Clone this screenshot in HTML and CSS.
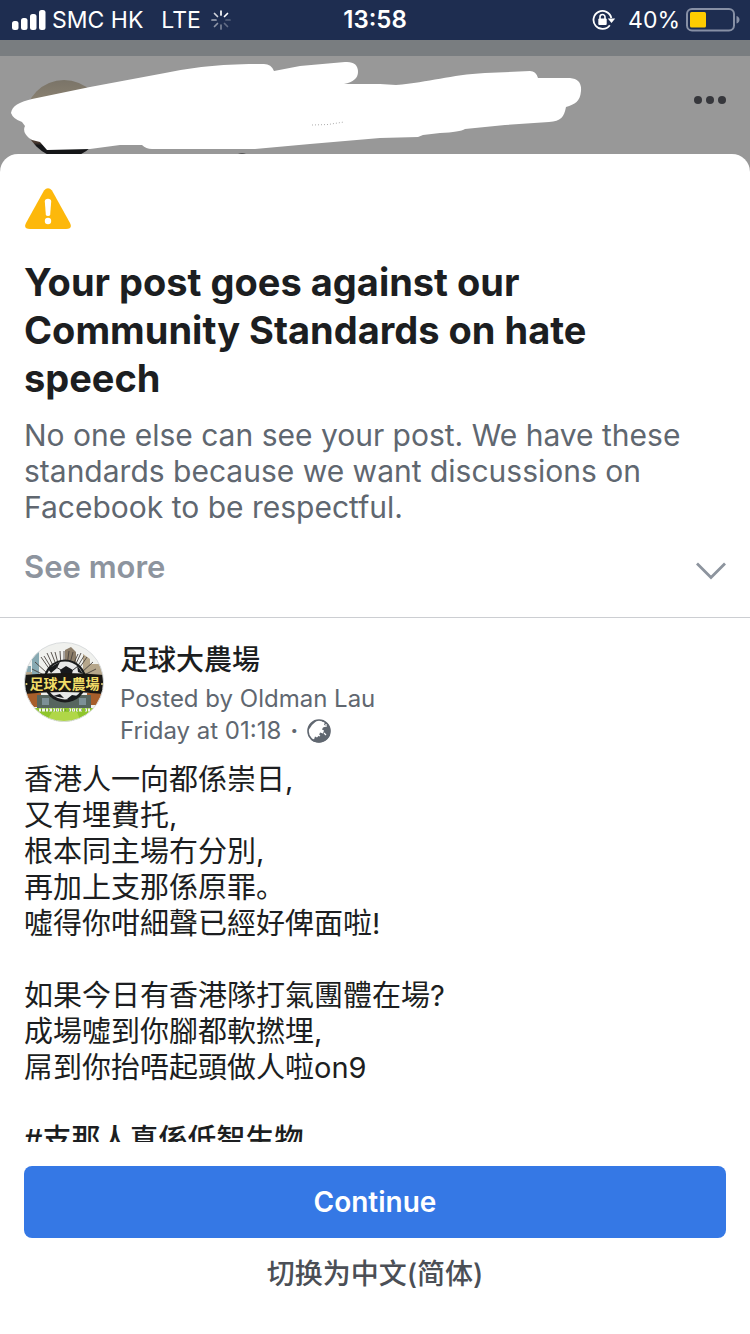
FILE: index.html
```html
<!DOCTYPE html>
<html lang="en">
<head>
<meta charset="utf-8">
<meta name="viewport" content="width=device-width, initial-scale=1">
<title>Community Standards</title>
<link rel="stylesheet" href="styles.css">
</head>
<body>
<div class="screen">
  <header class="status-bar">
    <div class="status-left">
      <svg class="signal" viewBox="0 0 34 20" aria-hidden="true"><g fill="#fff"><rect x="0" y="11" width="6.5" height="9" rx="2.5"/><rect x="9" y="8" width="6.5" height="12" rx="2.5"/><rect x="18" y="4" width="6.5" height="16" rx="2.5"/><rect x="27" y="0" width="6.5" height="20" rx="2.5"/></g></svg>
      <span>SMC HK</span>
      <span class="network">LTE</span>
      <svg class="spinner" viewBox="-10 -10 20 20" aria-hidden="true"><g stroke="#fff" stroke-width="1.7" stroke-linecap="round"><path d="M0-5V-9"/><path d="M3.5-3.5L6.5-6.5"/><path d="M5 0H9" opacity=".25"/><path d="M3.5 3.5L6.5 6.5" opacity=".3"/><path d="M0 5V9" opacity=".4"/><path d="M-3.5 3.5L-6.5 6.5" opacity=".5"/><path d="M-5 0H-9" opacity=".6"/><path d="M-3.5-3.5L-6.5-6.5" opacity=".8"/></g></svg>
    </div>
    <time class="clock">13:58</time>
    <div class="status-right">
      <svg class="lock" viewBox="0 0 24 22" aria-hidden="true"><path d="M17.8 16.2A9 9 0 1 1 19.3 9" fill="none" stroke="#fff" stroke-width="1.8"/><path d="M15.8 9.5h7.4l-3.7 4.6z" fill="#fff"/><rect x="6.3" y="9.6" width="8.4" height="6.4" rx="1" fill="#fff"/><path d="M8 10V8a2.5 2.5 0 0 1 5 0v2" fill="none" stroke="#fff" stroke-width="1.6"/></svg>
      <span>40%</span>
      <svg class="battery" viewBox="0 0 54 24" aria-hidden="true"><rect x="1" y="1" width="47" height="21.5" rx="5" fill="none" stroke="#8790a5" stroke-width="2"/><rect x="4" y="4" width="16" height="15.5" rx="1.5" fill="#ffcc00"/><path d="M50.5 8q3 1 3 3.800t-3 3.800z" fill="#8790a5"/></svg>
    </div>
  </header>
  <div class="strip"></div>
  <div class="post-header">
    <svg class="scribble" viewBox="0 56 600 98" aria-hidden="true">
      <defs><linearGradient id="face" x1="0" y1="0" x2="0" y2="1"><stop offset="0" stop-color="#7a7468"/><stop offset=".25" stop-color="#898070"/><stop offset=".8" stop-color="#4a3a30"/><stop offset=".84" stop-color="#151618"/></linearGradient></defs>
      <circle cx="64" cy="119" r="39" fill="url(#face)"/>
      <path d="M238 154q4-2 8 0z" fill="#555"/>
      <path fill="#fff" d="M11 113C12 106 19 102 32 99L90 87L165 73C195 67 220 64 262 64Q271 63 274 71L300 66L345 62Q358 61 358 72Q358 81 344 84L380 84L396 85C430 82 450 75 485 73L530 71Q536 71 538 78L570 78Q582 79 581 91C580 102 575 104 566 107C564 117 561 121 549 122L505 125L465 129Q460 132 440 133L423 135L418 137L380 138L310 144L255 149L152 149Q146 149 142 145L120 145L90 149L47 150L40 142L32 140L29 138Q22 132 25 126L22 122Q13 119 11 113Z"/>
      <path d="M312 125L328 124.500L344 122" stroke="#888" stroke-width=".7" stroke-dasharray="1 2" fill="none"/>
    </svg>
    <button class="more" type="button" aria-label="More options">
      <svg viewBox="0 0 32 8"><g fill="#36373c"><circle cx="4" cy="4" r="4"/><circle cx="16" cy="4" r="4"/><circle cx="28" cy="4" r="4"/></g></svg>
    </button>
  </div>
  <main class="sheet">
    <section class="notice">
      <svg class="warning" viewBox="0 0 48 42" aria-hidden="true"><path d="M20 2.500Q24-2 28 2.500L46 35Q49 41 42 41H6Q-1 41 2 35Z" fill="#fdb80b"/><path d="M20.800 13.500q0-2.800 3.200-2.800t3.200 2.800l-1 13q-.2 1.500-2.200 1.500t-2.200-1.500z" fill="#fff"/><circle cx="24" cy="33" r="3.200" fill="#fff"/></svg>
      <h1>Your post goes against our Community Standards on hate speech</h1>
      <p>No one else can see your post. We have these standards because we want discussions on Facebook to be respectful.</p>
      <button class="see-more" type="button">
        <span>See more</span>
        <svg viewBox="0 0 30 18" aria-hidden="true"><path d="M1 1.500L15 15.500L29 1.500" fill="none" stroke="#8d949e" stroke-width="2.800"/></svg>
      </button>
    </section>
    <article class="post">
      <div class="byline">
        <svg class="avatar" viewBox="0 0 80 80" role="img" aria-label="足球大農場">
          <defs><clipPath id="round"><circle cx="40" cy="40" r="39.500"/></clipPath></defs>
          <g clip-path="url(#round)">
            <path fill="#f0f1ee" d="M0 0h80v80H0z"/>
            <path fill="#87a9b2" d="M8 12l7-3v28H8zM0 24h7v14H0z"/><path fill="#b6a78c" d="M59 12l7 5v20h-7zM66 22h14v14H66zM0 30h8v8H0z"/>
            <path fill="#8c7d68" d="M41 8l6-3 5 5v15H41z"/>
            <g stroke="#49443f" stroke-width=".9"><path d="M40 25V9M35 25L31 10M30 26L23 11M26 28L17 15M23 31L11 20M20 33L8 27M45 25L49 10M50 26L57 11M54 28L63 15M57 31L69 20M60 33L72 27M33 25L27 10M37 24L36 9M43 24L45 9M48 25L54 12M28 27L20 14M52 27L60 14"/></g>
            <path fill="#a75e2b" d="M0 51h17v14H0zM63 51h17v12H63z"/><path fill="#56655e" d="M13 53h54v13H13z"/>
            <path d="M18 56h7v7h-7zM55 56h7v7h-7z" fill="#7d9096"/>
            <path fill="#8fc52d" d="M0 66h80v14H0z"/><path fill="#b0d748" d="M28 70h25l4 10H22z"/>
            <circle cx="41" cy="39" r="21.500" fill="#191b1c"/><circle cx="41" cy="38.500" r="19" fill="#e7e8e8"/>
            <path fill="#17191c" d="M36 28l6-4 7 4-2 7h-9zM24 27l8-5 4-2-3 6-6 5zM53 23l6 9-5-2zM43 57l5-4 6 1-6 3zM29 54l7-2 4 4z"/><path d="M32 25l5 3M49 28l5-4" stroke="#333"/>
            <path fill="#191713" d="M0 33Q40 29 80 33V52Q40 48 0 52Z"/>
            <g fill="#e5d477"><circle cx="2.500" cy="42" r="1"/><circle cx="78" cy="42" r="1"/></g>
            <text class="avatar-name" x="40.500" y="47" text-anchor="middle">足球大農場</text>
            <path d="M15 68h25M45 68h13M61 68h5" stroke="#f3f6ed" stroke-width="3" stroke-dasharray="2 1 3 1"/><path d="M17 68h48" stroke="#58664a" stroke-width="1" stroke-dasharray="1 3"/>
          </g>
          <circle cx="40" cy="40" r="39.500" fill="none" stroke="#d9dcdd"/>
        </svg>
        <div class="author">
          <h2>足球大農場</h2>
          <div>Posted by Oldman Lau</div>
          <div class="date"><span>Friday at 01:18</span><b>·</b>
            <svg class="globe" viewBox="0 0 24 24" role="img" aria-label="Public"><circle cx="12" cy="12" r="11" fill="#fff" stroke="#606770" stroke-width="1.600"/><path fill="#606770" d="M15 1.500C21 3 24 8 23 14c-1 6-6 9.500-11 9.500-4 0-7-1-9-4l4 1 1-3 2 1 2-2 1-3 3 1 1-3-2-1 1-2 3-1-2-2 1-2-3-1zM1 11c1-6 5-9 9-9.500L5 6l-2 3z"/><path d="M10 15l3 2M17 14l2 2M19 5v3" stroke="#fff" stroke-width="1.200"/></svg>
          </div>
        </div>
      </div>
      <div class="content">
        <p>香港人一向都係崇日,<br>又有埋費托,<br>根本同主場冇分別,<br>再加上支那係原罪。<br>噓得你咁細聲已經好俾面啦!</p>
        <p>如果今日有香港隊打氣團體在場?<br>成場噓到你腳都軟撚埋,<br>屌到你抬唔起頭做人啦on9</p>
        <p class="tag">#支那人真係低智生物</p>
      </div>
    </article>
    <footer class="actions">
      <button class="continue" type="button">Continue</button>
      <button class="language" type="button" lang="zh-Hans">切换为中文(简体)</button>
    </footer>
  </main>
</div>
</body>
</html>
```
FILE: styles.css
```css
* { box-sizing: border-box; }
body {
  margin: 0;
  background: #989898;
  color: #1c1e21;
  font-family: Inter, "Noto Sans CJK TC", sans-serif;
}
h1, h2, p { margin: 0; }
button {
  padding: 0;
  border: 0;
  background: none;
  color: inherit;
  font: inherit;
  cursor: pointer;
}
svg { display: block; flex: none; }

.screen {
  display: flex;
  flex-direction: column;
  height: 100vh;
}
.status-bar {
  display: grid;
  grid-template-columns: 1fr auto 1fr;
  align-items: center;
  height: 40px;
  flex: none;
  padding: 0 12px;
  background: #1e2d50;
  color: #fff;
  font-size: 23px;
  line-height: 40px;
}
.status-left, .status-right { display: flex; align-items: center; gap: 6px; }
.status-right { justify-content: flex-end; margin-right: -2px; }
.signal { width: 34px; height: 20px; }
.network { margin-left: 12px; }
.spinner { width: 20px; height: 20px; margin-left: 4px; }
.clock { font-size: 24px; font-weight: 600; }
.lock { width: 24px; height: 22px; margin-right: 6px; }
.battery { width: 54px; height: 24px; }
.strip { height: 16px; flex: none; background: #797d80; }
.post-header {
  display: flex;
  align-items: flex-start;
  justify-content: space-between;
  height: 98px;
  flex: none;
  padding-right: 24px;
}
.scribble { width: 600px; height: 98px; }
.more { padding: 40px 0; }
.more svg { width: 32px; height: 8px; }

.sheet {
  display: flex;
  flex-direction: column;
  flex: 1;
  min-height: 0;
  border-radius: 18px 18px 0 0;
  background: #fff;
}
.notice {
  flex: none;
  padding: 34px 24px 32px;
  border-bottom: 1px solid #ccced2;
}
.warning { width: 48px; height: 42px; margin-bottom: 28px; }
.notice h1 {
  margin-bottom: 15px;
  font-size: 38px;
  font-weight: 700;
  line-height: 48px;
}
.notice p {
  margin-bottom: 24px;
  color: #606770;
  font-size: 30px;
  line-height: 36px;
}
.see-more {
  display: flex;
  align-items: center;
  justify-content: space-between;
  width: 100%;
  color: #8d949e;
  font-size: 31px;
  font-weight: 600;
  line-height: 36px;
}
.see-more svg { width: 30px; height: 18px; margin-top: 8px; }

.post {
  flex: 1;
  min-height: 0;
  padding: 24px 24px 0;
  overflow: hidden;
}
.byline { display: flex; gap: 16px; margin-bottom: 15px; }
.avatar { width: 80px; height: 80px; }
.avatar-name {
  fill: #f1dc67;
  font: 700 14px "Noto Sans CJK TC", sans-serif;
}
.author { color: #606770; font-size: 24px; line-height: 32px; }
.author h2 {
  margin-bottom: 5px;
  color: #1c1e21;
  font-size: 28px;
  font-weight: 500;
  line-height: 36px;
}
.date { display: flex; align-items: center; gap: 9px; }
.globe { width: 24px; height: 24px; }
.content {
  font-family: Inter, "Noto Sans CJK SC", sans-serif;
  font-size: 29px;
  line-height: 36px;
}
.content p { margin-bottom: 36px; }
.content .tag { font-weight: 500; }

.actions {
  display: flex;
  flex-direction: column;
  flex: none;
  gap: 16px;
  padding: 24px 24px 40px;
}
.continue {
  height: 72px;
  border-radius: 8px;
  background: #3578e5;
  color: #fff;
  font-size: 28px;
  font-weight: 600;
}
.language {
  color: #4b4f56;
  font-family: Inter, "Noto Sans CJK SC", sans-serif;
  font-size: 28px;
  font-weight: 500;
  line-height: 40px;
}
```
